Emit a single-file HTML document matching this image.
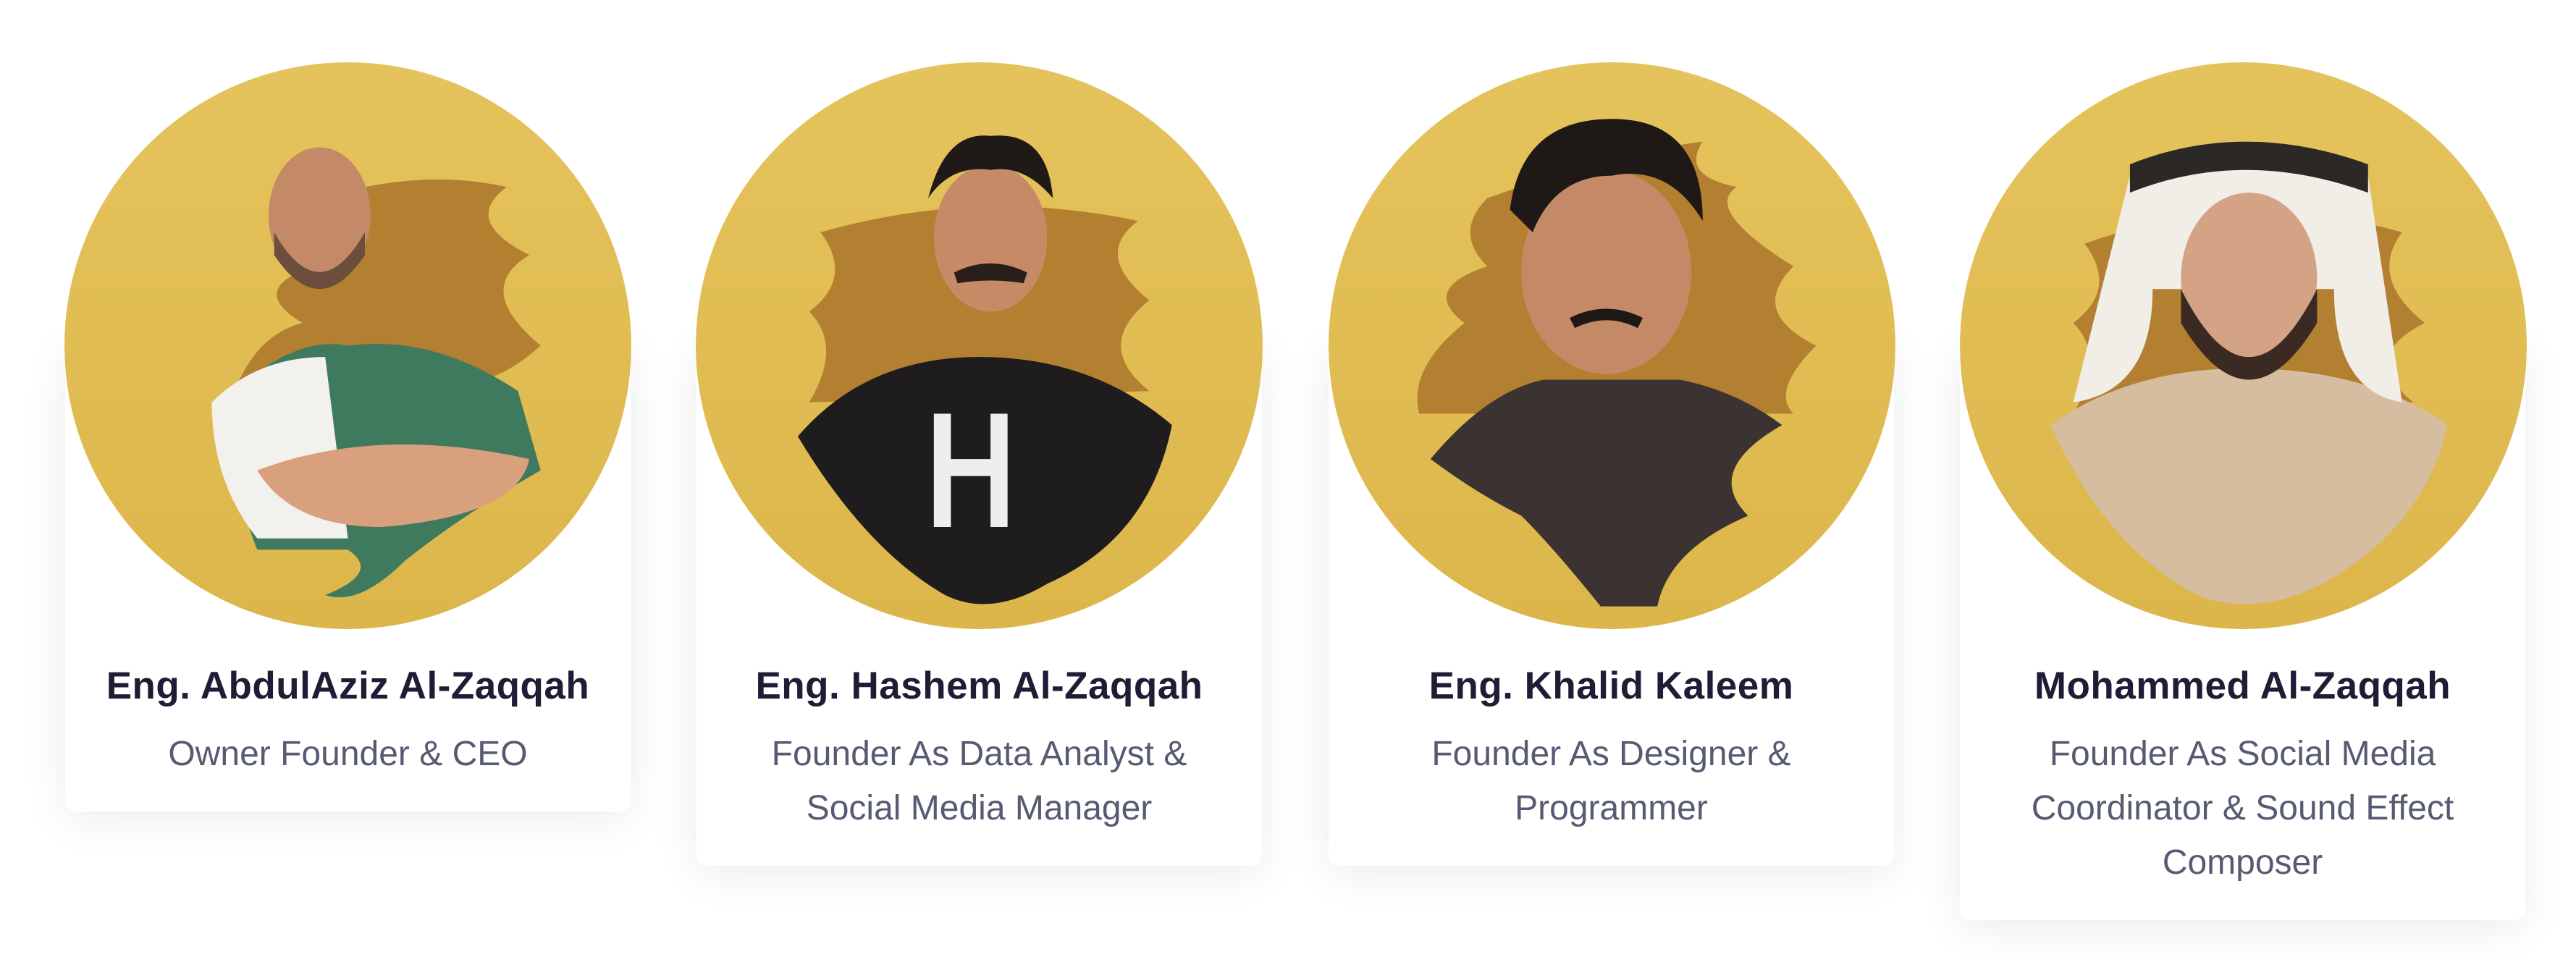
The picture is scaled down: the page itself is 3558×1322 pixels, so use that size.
<!DOCTYPE html>
<html><head><meta charset="utf-8"><style>
html,body{margin:0;padding:0;background:#fff;width:3558px;height:1322px;overflow:hidden;font-family:"Liberation Sans",sans-serif}
.card{position:absolute;top:477px;width:781px;background:#fff;border-radius:14px;box-shadow:0 10px 60px rgba(0,0,0,0.08)}
.av{position:absolute;top:86px;width:783px;height:783px}
.name{position:absolute;top:913px;width:781px;text-align:center;font-weight:bold;font-size:53px;line-height:70px;color:#1e1d36;letter-spacing:0.5px}
.sub{position:absolute;top:1004px;width:781px;text-align:center;font-size:48px;line-height:75px;color:#565a72}
</style></head><body>
<svg width="0" height="0" style="position:absolute"><defs>
<linearGradient id="g" x1="0" y1="0" x2="0" y2="1"><stop offset="0" stop-color="#e5c35c"/><stop offset="1" stop-color="#dcb64a"/></linearGradient>
<clipPath id="c"><circle cx="50" cy="50" r="50"/></clipPath>
</defs></svg>

<div class="card" style="left:90px;height:644px"></div>
<div class="card" style="left:962px;height:719px"></div>
<div class="card" style="left:1835px;height:719px"></div>
<div class="card" style="left:2707px;height:794px"></div>

<!-- avatar 1 -->
<svg class="av" style="left:89px" viewBox="0 0 100 100"><g clip-path="url(#c)">
<circle cx="50" cy="50" r="50" fill="url(#g)"/>
<path d="M40 26 Q60 18 78 22 Q70 28 82 34 Q72 40 84 50 Q75 58 68 56 L30 58 Q34 48 42 46 Q32 40 44 36 Q36 32 40 26Z" fill="#b37f30"/>
<path d="M28 60 Q40 48 50 50 Q65 48 80 58 L84 72 Q70 80 60 88 Q52 96 46 94 Q56 90 50 86 L34 86 Q30 76 28 60Z" fill="#3f7a5e"/>
<path d="M26 60 Q34 52 46 52 L50 84 L34 84 Q26 74 26 60Z" fill="#f3f1ee"/>
<path d="M34 72 Q55 64 82 70 Q80 80 56 82 Q40 82 34 72Z" fill="#d9a07e"/>
<ellipse cx="45" cy="27" rx="9" ry="12" fill="#c48a67"/>
<path d="M37 30 Q45 44 53 30 L53 34 Q45 46 37 34Z" fill="#6b4f3c"/>
</g></svg>

<!-- avatar 2 -->
<svg class="av" style="left:961px" viewBox="0 0 100 100"><g clip-path="url(#c)">
<circle cx="50" cy="50" r="50" fill="url(#g)"/>
<path d="M22 30 Q50 22 78 28 Q70 34 80 42 Q70 50 80 58 L20 60 Q26 50 20 44 Q28 38 22 30Z" fill="#b37f30"/>
<path d="M18 66 Q30 52 50 52 Q70 52 84 64 Q80 84 62 92 Q52 98 44 94 Q30 86 18 66Z" fill="#1e1c1c"/>
<path d="M42 62 L45 62 L45 82 L42 82Z M52 62 L55 62 L55 82 L52 82Z M42 70 L55 70 L55 73 L42 73Z" fill="#eee"/>
<ellipse cx="52" cy="31" rx="10" ry="13" fill="#c68a66"/>
<path d="M41 24 Q44 12 52 13 Q62 12 63 24 Q58 18 52 19 Q45 18 41 24Z" fill="#1f1a18"/>
<path d="M46 38 Q52 35 58 38 Q52 37 46 38Z" stroke="#2a1e1a" stroke-width="2" fill="none"/>
</g></svg>

<!-- avatar 3 -->
<svg class="av" style="left:1835px" viewBox="0 0 100 100"><g clip-path="url(#c)">
<circle cx="50" cy="50" r="50" fill="url(#g)"/>
<path d="M28 24 Q50 16 66 14 Q62 20 72 22 Q66 26 82 36 Q74 44 86 50 Q78 58 82 62 L16 62 Q14 54 24 46 Q16 40 28 36 Q22 30 28 24Z" fill="#b37f30"/>
<path d="M18 70 Q28 58 38 56 L62 56 Q72 58 80 64 Q66 72 74 80 Q60 86 58 96 L48 96 Q40 86 34 80 Q26 76 18 70Z" fill="#3a3331"/>
<ellipse cx="49" cy="37" rx="15" ry="18" fill="#c48a68"/>
<path d="M32 26 Q34 10 50 10 Q66 10 66 28 Q60 18 50 20 Q40 20 36 30Z" fill="#1e1816"/>
<path d="M43 46 Q49 43 55 46" stroke="#1e1816" stroke-width="2" fill="none"/>
</g></svg>

<!-- avatar 4 -->
<svg class="av" style="left:2707px" viewBox="0 0 100 100"><g clip-path="url(#c)">
<circle cx="50" cy="50" r="50" fill="url(#g)"/>
<path d="M22 32 Q50 22 78 30 Q72 38 82 46 Q70 52 80 60 L20 62 Q26 52 20 46 Q28 40 22 32Z" fill="#b37f30"/>
<path d="M16 64 Q30 54 50 54 Q72 54 86 64 Q82 82 64 92 Q52 98 42 94 Q26 86 16 64Z" fill="#d6bda0"/>
<path d="M30 20 Q50 8 72 20 L78 60 Q66 58 66 40 L34 40 Q34 58 20 60Z" fill="#f1ede7"/>
<path d="M30 18 Q50 10 72 18 L72 23 Q50 15 30 23Z" fill="#2b2826"/>
<ellipse cx="51" cy="38" rx="12" ry="15" fill="#d4a386"/>
<path d="M39 40 Q51 64 63 40 L63 46 Q51 66 39 46Z" fill="#3a2a22"/>
</g></svg>

<div class="name" style="left:90px">Eng. AbdulAziz Al-Zaqqah</div>
<div class="sub" style="left:90px">Owner Founder &amp; CEO</div>

<div class="name" style="left:962px">Eng. Hashem Al-Zaqqah</div>
<div class="sub" style="left:962px">Founder As Data Analyst &amp;<br>Social Media Manager</div>

<div class="name" style="left:1835px">Eng. Khalid Kaleem</div>
<div class="sub" style="left:1835px">Founder As Designer &amp;<br>Programmer</div>

<div class="name" style="left:2707px">Mohammed Al-Zaqqah</div>
<div class="sub" style="left:2707px">Founder As Social Media<br>Coordinator &amp; Sound Effect<br>Composer</div>
</body></html>
